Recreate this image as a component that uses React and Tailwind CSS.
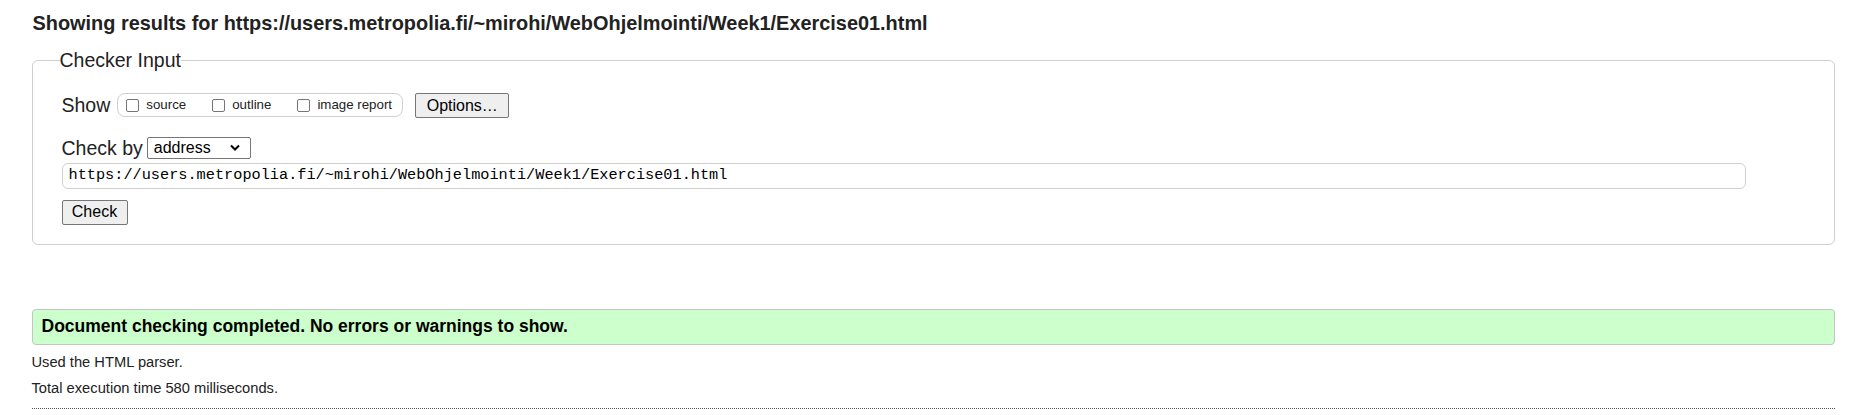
import React from 'react';

// checker result page: input fieldset, status bar, stats
const URL = 'https://users.metropolia.fi/~mirohi/WebOhjelmointi/Week1/Exercise01.html';

function Box({ label }) {
  return (
    <label className="flex items-center">
      <span className="w-[13px] h-[13px] border border-[#767676] rounded-[2px] bg-white" />
      <span className="ml-[7px] text-[13.3px] text-[#222]">{label}</span>
    </label>
  );
}

export default function App() {
  return (
    <div className="min-h-screen bg-white pt-[12px] pl-[31.5px] pr-[20px] text-[#222]" style={{ fontFamily: '"Liberation Sans", Arial, sans-serif' }}>
      <h2 className="text-[19.9px] leading-[22px] font-bold pl-[1px]">Showing results for {URL}</h2>

      <fieldset className="mt-[15px] border border-[#cfcfcf] rounded-[6px] pl-[27px] pr-[27px] pt-[21.5px] pb-[19px]">
        <legend className="text-[19.5px] leading-[22px] px-0">Checker Input</legend>

        {/* SHOW ROW */}
        <div className="flex items-center h-[25px] pl-[2px]">
          <span className="text-[19.5px] leading-[22px]">Show</span>
          <div className="ml-[7px] h-[24px] w-[286px] border border-[#cfcfcf] rounded-[8px] flex items-center pl-[8px]">
            <Box label="source" />
            <div className="ml-[26px]"><Box label="outline" /></div>
            <div className="ml-[26px]"><Box label="image report" /></div>
          </div>
          <button className="ml-[12px] h-[25px] w-[94px] bg-[#efefef] border border-[#767676] rounded-[2px] text-[16px] text-black">Options…</button>
        </div>

        {/* CHECK BY */}
        <div className="flex items-center h-[22px] mt-[19px] pl-[2px]">
          <span className="text-[19.5px] leading-[22px]">Check by</span>
          <div className="ml-[4px] h-[22px] w-[104px] border border-[#767676] rounded-[2px] flex items-center justify-between pl-[6px] pr-[10px] text-[16px] text-black">
            <span>address</span>
            <svg width="10" height="7" viewBox="0 0 10 7"><path d="M1 1.5l4 4 4-4" fill="none" stroke="#000" strokeWidth="2" /></svg>
          </div>
        </div>

        <div className="mt-[4px] ml-[2px] w-[1684px] h-[26px] border border-[#cfcfcf] rounded-[6px] flex items-center pl-[6px] text-[15.25px] text-black" style={{ fontFamily: '"Liberation Mono", Consolas, monospace' }}>
          {URL}
        </div>

        <button className="mt-[11px] ml-[2px] h-[25px] w-[66px] bg-[#efefef] border border-[#767676] rounded-[2px] text-[16px] text-black flex items-center justify-center">Check</button>
      </fieldset>

      <div className="mt-[64px] h-[36px] bg-[#ccffcc] border border-[#c4c4c4] rounded-[4px] flex items-center pl-[9px] text-[17.5px] font-bold text-black">
        Document checking completed. No errors or warnings to show.
      </div>

      <p className="mt-[9.5px] text-[14.7px] leading-[17px] text-[#222]">Used the HTML parser.</p>
      <p className="mt-[9px] text-[14.7px] leading-[17px] text-[#222]">Total execution time 580 milliseconds.</p>
      <div className="mt-[10.5px] border-t border-dotted border-[#555]" />
    </div>
  );
}
